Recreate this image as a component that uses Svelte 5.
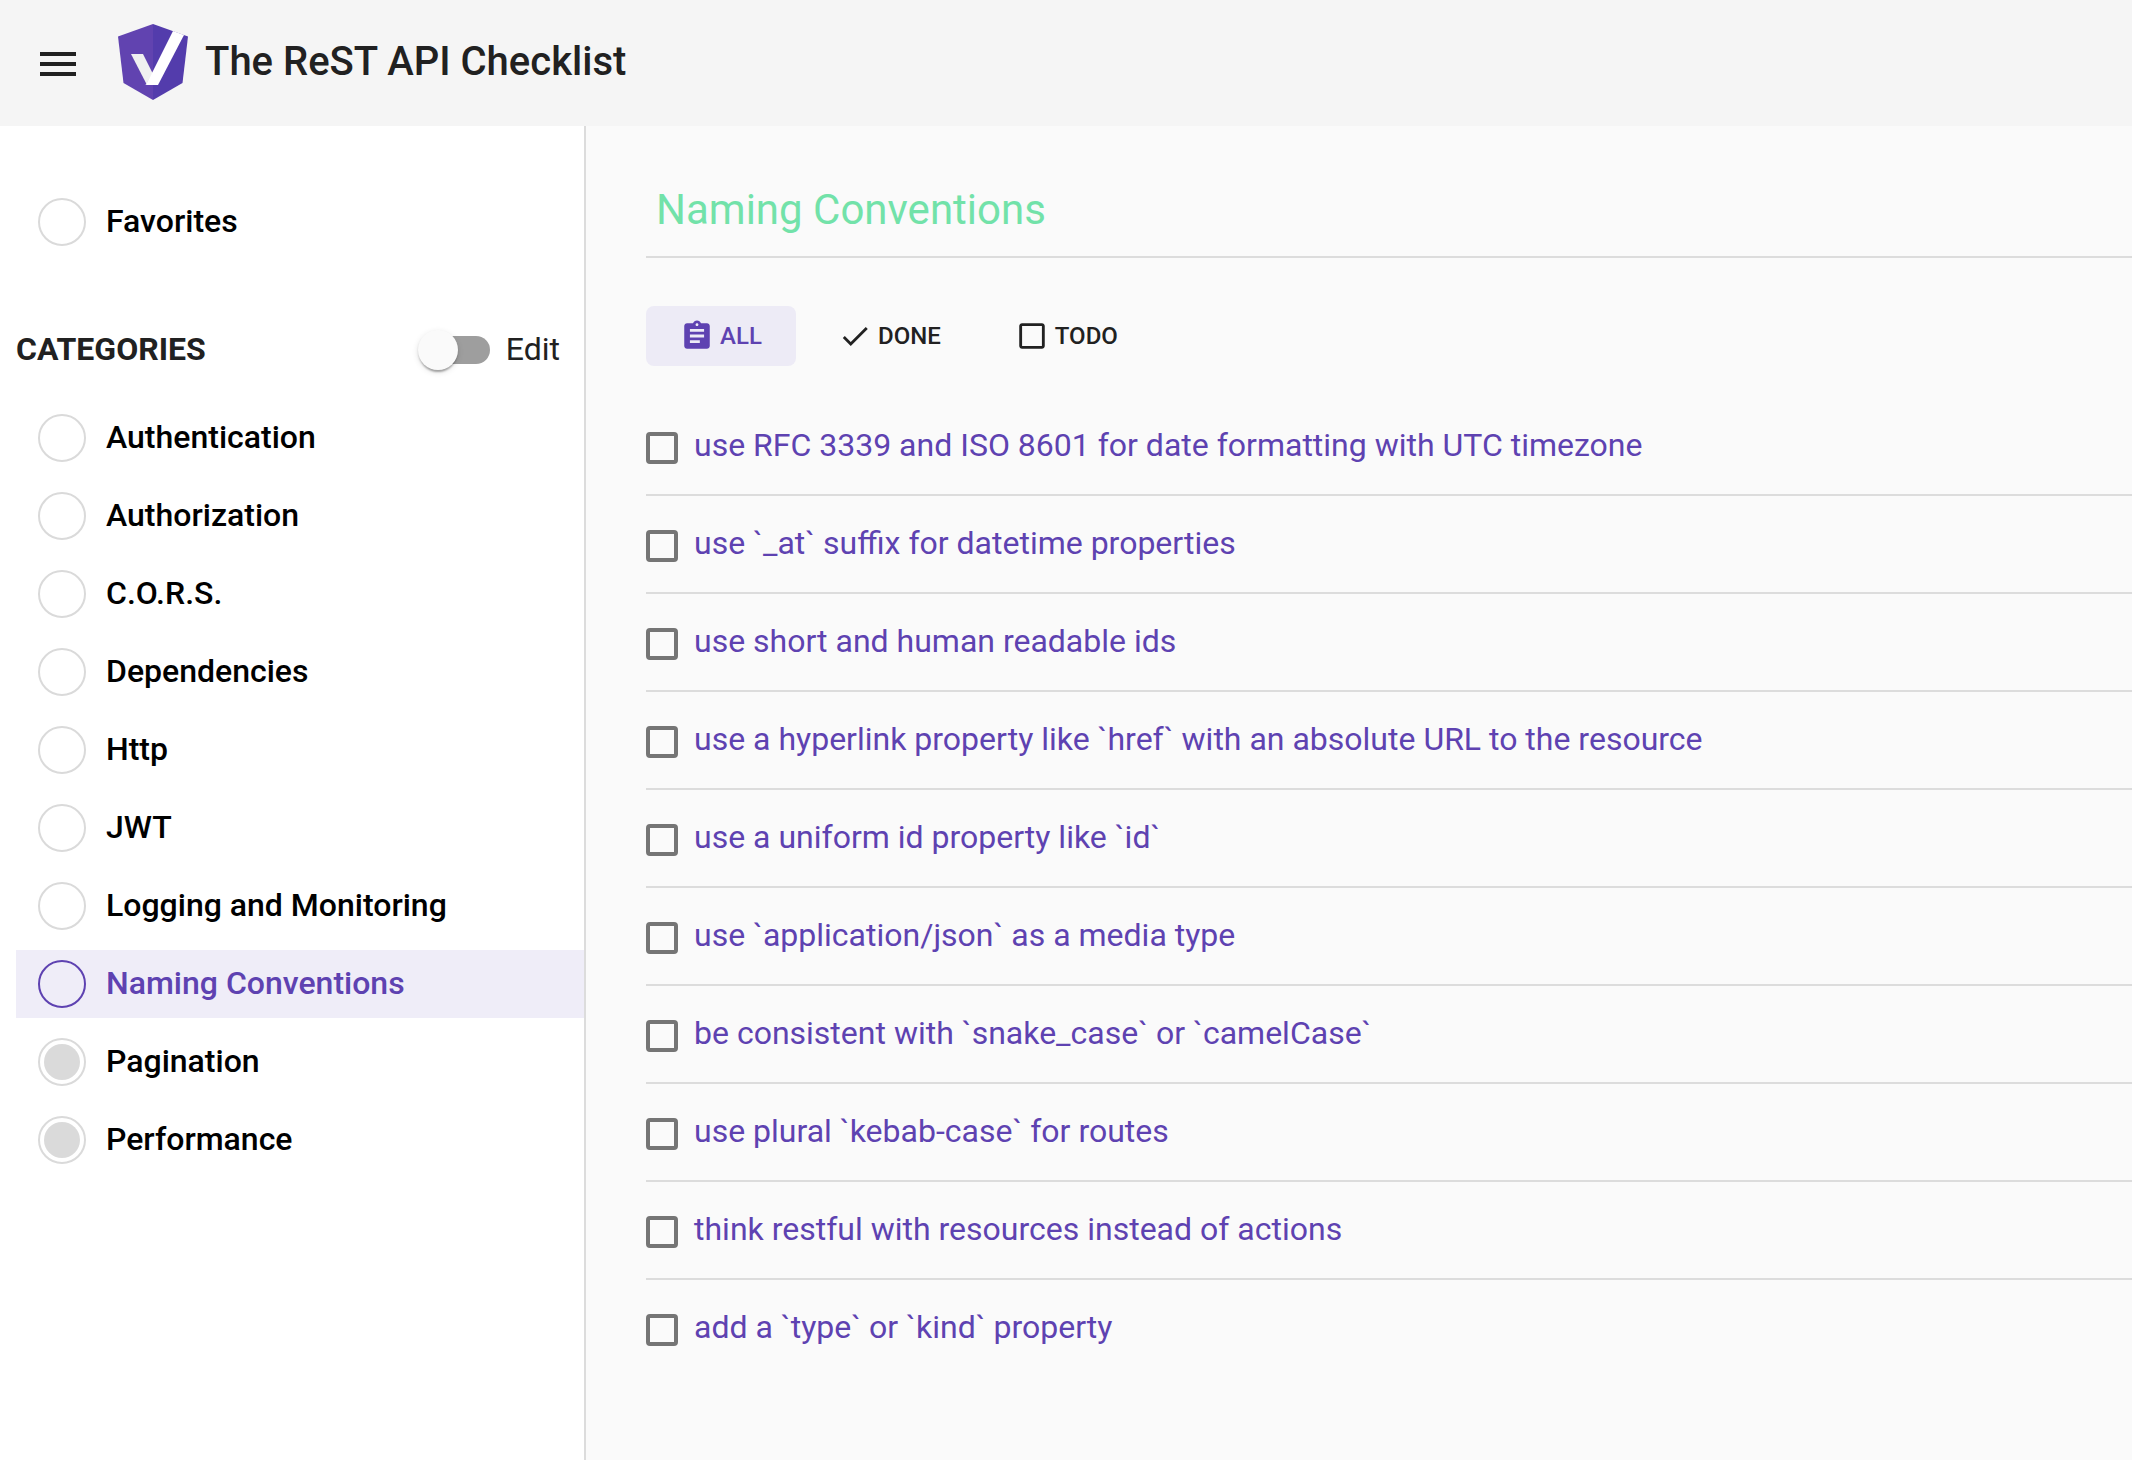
<script>
  const categories = [
    { name: 'Authentication', fill: false },
    { name: 'Authorization', fill: false },
    { name: 'C.O.R.S.', fill: false },
    { name: 'Dependencies', fill: false },
    { name: 'Http', fill: false },
    { name: 'JWT', fill: false },
    { name: 'Logging and Monitoring', fill: false },
    { name: 'Naming Conventions', fill: false },
    { name: 'Pagination', fill: true },
    { name: 'Performance', fill: true }
  ];
  const items = [
    'use RFC 3339 and ISO 8601 for date formatting with UTC timezone',
    'use `_at` suffix for datetime properties',
    'use short and human readable ids',
    'use a hyperlink property like `href` with an absolute URL to the resource',
    'use a uniform id property like `id`',
    'use `application/json` as a media type',
    'be consistent with `snake_case` or `camelCase`',
    'use plural `kebab-case` for routes',
    'think restful with resources instead of actions',
    'add a `type` or `kind` property'
  ];
  let current = $state('Naming Conventions');
  let filter = $state('all');
</script>

<div class="app">
  <header>
    <button class="menu" aria-label="Menu">
      <svg viewBox="0 0 24 24" width="48" height="48"><path fill="currentColor" d="M3 18h18v-2H3v2zm0-5h18v-2H3v2zm0-7v2h18V6H3z" /></svg>
    </button>
    <a class="brand" href="#home">
      <svg viewBox="0 0 70 76" width="70" height="76" aria-hidden="true">
        <path fill="#6143b0" d="M35 0 0 12.500 5.500 59 35 76z" />
        <path fill="#533cac" d="M35 0 70 12.500 64.500 59 35 76z" />
        <path fill="#f0f0f1" d="M13 30h12l10 20-6 11z" />
        <path fill="#dcdce0" d="M35 48 28 60l-1 1 7-3z" />
        <path fill="#fff" d="M55 7 66 11 40 61H28z" />
      </svg>
      <span>The ReST API Checklist</span>
    </a>
  </header>

  <div class="body">
    <nav>
      <a class="row" href="#favorites"><span class="dot"></span>Favorites</a>
      <div class="heading">
        <h2>CATEGORIES</h2>
        <label class="edit"><input type="checkbox" role="switch" /><span>Edit</span></label>
      </div>
      <ul class="categories">
        {#each categories as c}
          <li>
            <a class="row" class:active={current === c.name} href="#{c.name}" onclick={() => (current = c.name)}>
              <span class="dot" class:fill={c.fill}></span>{c.name}
            </a>
          </li>
        {/each}
      </ul>
    </nav>

    <main>
      <h1>{current}</h1>
      <div class="filters">
        <button class:on={filter === 'all'} onclick={() => (filter = 'all')}>
          <svg viewBox="0 0 24 24" width="34" height="34"><path fill="currentColor" d="M19 3h-4.180C14.400 1.840 13.300 1 12 1c-1.300 0-2.400.84-2.820 2H5c-1.100 0-2 .9-2 2v14c0 1.100.9 2 2 2h14c1.100 0 2-.9 2-2V5c0-1.100-.9-2-2-2zm-7 0c.55 0 1 .45 1 1s-.45 1-1 1-1-.45-1-1 .45-1 1-1zm2 14H7v-2h7v2zm3-4H7v-2h10v2zm0-4H7V7h10v2z" /></svg>
          ALL
        </button>
        <button class:on={filter === 'done'} onclick={() => (filter = 'done')}>
          <svg viewBox="0 0 24 24" width="34" height="34"><path fill="currentColor" d="M9 16.200L4.800 12l-1.400 1.400L9 19 21 7l-1.400-1.400L9 16.200z" /></svg>
          DONE
        </button>
        <button class:on={filter === 'todo'} onclick={() => (filter = 'todo')}>
          <svg viewBox="0 0 24 24" width="34" height="34"><path fill="currentColor" d="M19 5v14H5V5h14m0-2H5c-1.100 0-2 .9-2 2v14c0 1.100.9 2 2 2h14c1.100 0 2-.9 2-2V5c0-1.100-.9-2-2-2z" /></svg>
          TODO
        </button>
      </div>
      <ul class="checks">
        {#each items as item, i}
          <li>
            <input type="checkbox" id="item-{i}" />
            <label for="item-{i}">{item}</label>
          </li>
        {/each}
      </ul>
    </main>
  </div>
</div>

<style>
  :global(body) {
    background: #fafafa;
  }
  .app {
    display: flex;
    flex-direction: column;
    min-height: 100vh;
    font-family: Roboto, sans-serif;
    font-size: 32px;
    line-height: 48px;
    color: #212121;
  }
  h1, h2, ul {
    margin: 0;
    padding: 0;
    list-style: none;
  }
  a {
    color: inherit;
    text-decoration: none;
  }
  button {
    border: 0;
    padding: 0;
    background: none;
    font: inherit;
    color: inherit;
    cursor: pointer;
  }
  input {
    appearance: none;
    margin: 0;
    flex: none;
    cursor: pointer;
  }
  svg {
    display: block;
    flex: none;
  }
  header {
    display: flex;
    align-items: center;
    gap: 36px;
    min-height: 126px;
    padding: 0 34px;
    background: #f5f5f5;
  }
  .menu {
    padding-top: 2px;
  }
  .brand {
    display: flex;
    align-items: center;
    gap: 17px;
    padding-bottom: 2px;
    font-size: 40px;
    font-weight: 500;
  }
  .body {
    display: flex;
    flex: 1;
  }
  nav {
    box-sizing: border-box;
    flex: none;
    width: 586px;
    padding: 62px 0 40px 16px;
    background: #fff;
    border-right: 2px solid #dcdcdc;
    line-height: 46px;
  }
  .row {
    display: flex;
    gap: 20px;
    padding: 10px 22px;
    font-weight: 500;
    color: #000;
  }
  .dot {
    box-sizing: border-box;
    flex: none;
    width: 48px;
    height: 48px;
    padding: 4px;
    border: 2px solid #dadada;
    border-radius: 50%;
  }
  .dot.fill {
    background: #dadada content-box;
  }
  .row.active {
    background: #efedf8;
    color: #5e42b1;
  }
  .active .dot {
    border-color: #5e42b1;
  }
  .heading {
    display: flex;
    justify-content: space-between;
    padding: 70px 24px 32px 0;
  }
  h2 {
    font-size: 32px;
    font-weight: 700;
  }
  .edit {
    display: flex;
    gap: 16px;
  }
  .edit input {
    position: relative;
    width: 68px;
    height: 28px;
    margin-top: 10px;
    border-radius: 14px;
    background: #9e9e9e;
  }
  .edit input::before {
    content: '';
    position: absolute;
    left: -4px;
    top: -6px;
    width: 40px;
    height: 40px;
    border-radius: 50%;
    background: #fafafa;
    box-shadow: 0 4px 2px -2px rgba(0, 0, 0, 0.2), 0 2px 2px rgba(0, 0, 0, 0.14), 0 2px 6px rgba(0, 0, 0, 0.12);
  }
  .edit input:checked::before {
    left: 32px;
    background: #5e42b1;
  }
  .categories {
    display: grid;
    gap: 10px;
  }
  main {
    flex: 1;
    min-width: 0;
    padding: 60px 0 60px 60px;
  }
  h1 {
    padding: 0 10px 22px;
    border-bottom: 2px solid #dcdcdc;
    font-size: 42px;
    font-weight: 400;
    color: #72e2a9;
  }
  .filters {
    display: flex;
    gap: 10px;
    padding: 48px 0 32px;
  }
  .filters button {
    display: flex;
    align-items: center;
    justify-content: center;
    gap: 6px;
    min-width: 150px;
    height: 60px;
    padding: 0 32px;
    border-radius: 8px;
    font-size: 24px;
    font-weight: 500;
  }
  .filters .on {
    background: #edebf6;
    color: #5e42b1;
  }
  .checks li {
    display: flex;
    gap: 16px;
    padding: 23px 0 25px;
    color: #5e42b1;
  }
  .checks li + li {
    border-top: 2px solid #dcdcdc;
  }
  .checks input {
    box-sizing: border-box;
    width: 32px;
    height: 32px;
    margin-top: 11px;
    border: 4px solid #757575;
    border-radius: 4px;
  }
  .checks input:checked {
    background: #5e42b1;
    border-color: #5e42b1;
  }
</style>
